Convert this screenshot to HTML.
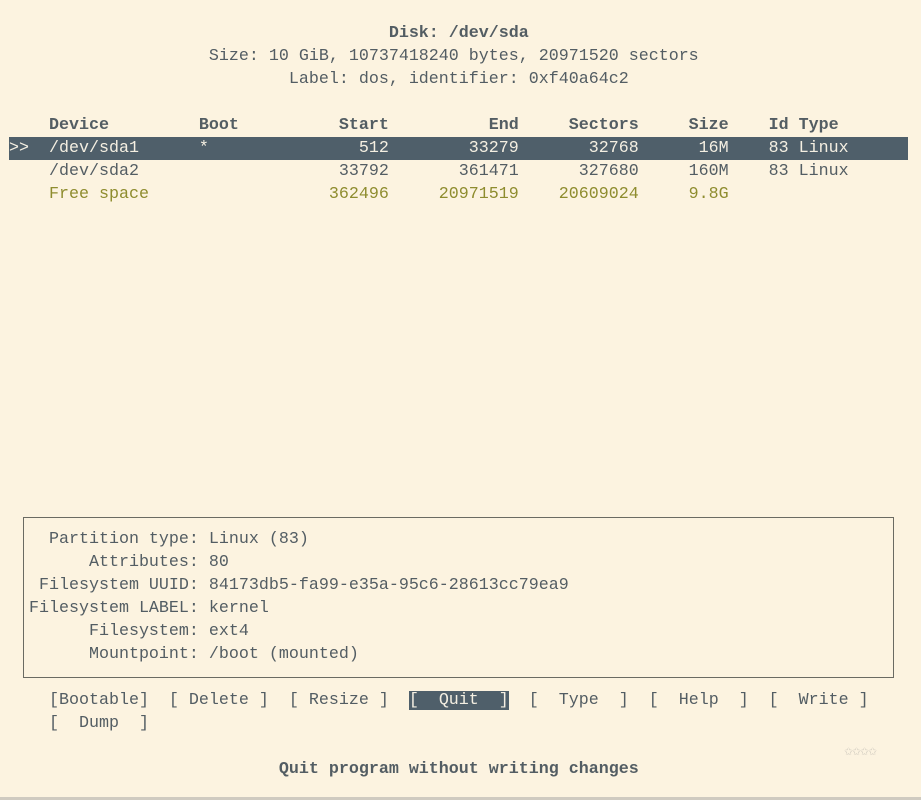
<!DOCTYPE html>
<html><head><meta charset="utf-8"><style>
html,body{margin:0;padding:0}
body{width:921px;height:800px;background:#fcf3e0;position:relative;overflow:hidden;font-family:"Liberation Mono",monospace;font-size:16.67px;color:#535d63}
.l{position:absolute;left:9px;height:23px;line-height:23px;white-space:pre}
b{font-weight:bold}
.hl{position:absolute;left:9px;top:137px;width:899px;height:23px;background:#4f5f6a}
.w{color:#f4efe2}
.o{color:#8e8c2e}
.box{position:absolute;left:23px;top:517px;width:869px;height:159px;border:1.5px solid #6a6a62}
.q{background:#4f5f6a;color:#f4efe2}
.bot{position:absolute;left:0;top:797px;width:921px;height:3px;background:#cfcac0}
.stars{position:absolute;left:844px;top:741px;font-size:15px;color:#d2ccc0;letter-spacing:-1px}
</style></head><body>
<div class="l" style="top:22px"><b>                                      Disk: /dev/sda</b></div>
<div class="l" style="top:45px">                    Size: 10 GiB, 10737418240 bytes, 20971520 sectors</div>
<div class="l" style="top:68px">                            Label: dos, identifier: 0xf40a64c2</div>
<div class="l" style="top:114px"><b>    Device         Boot          Start          End     Sectors     Size    Id Type</b></div>
<div class="hl"></div>
<div class="l w" style="top:137px">&gt;&gt;  /dev/sda1      *               512        33279       32768      16M    83 Linux</div>
<div class="l" style="top:160px">    /dev/sda2                    33792       361471      327680     160M    83 Linux</div>
<div class="l o" style="top:183px">    Free space                  362496     20971519    20609024     9.8G</div>
<div class="box"></div>
<div class="l" style="top:528px">    Partition type: Linux (83)</div>
<div class="l" style="top:551px">        Attributes: 80</div>
<div class="l" style="top:574px">   Filesystem UUID: 84173db5-fa99-e35a-95c6-28613cc79ea9</div>
<div class="l" style="top:597px">  Filesystem LABEL: kernel</div>
<div class="l" style="top:620px">        Filesystem: ext4</div>
<div class="l" style="top:643px">        Mountpoint: /boot (mounted)</div>
<div class="l" style="top:689px">    [Bootable]  [ Delete ]  [ Resize ]  <span class="q">[  Quit  ]</span>  [  Type  ]  [  Help  ]  [  Write ]</div>
<div class="l" style="top:712px">    [  Dump  ]</div>
<div class="stars">✩✩✩✩</div>
<div class="l" style="top:758px"><b>                           Quit program without writing changes</b></div>
<div class="bot"></div>
</body></html>
